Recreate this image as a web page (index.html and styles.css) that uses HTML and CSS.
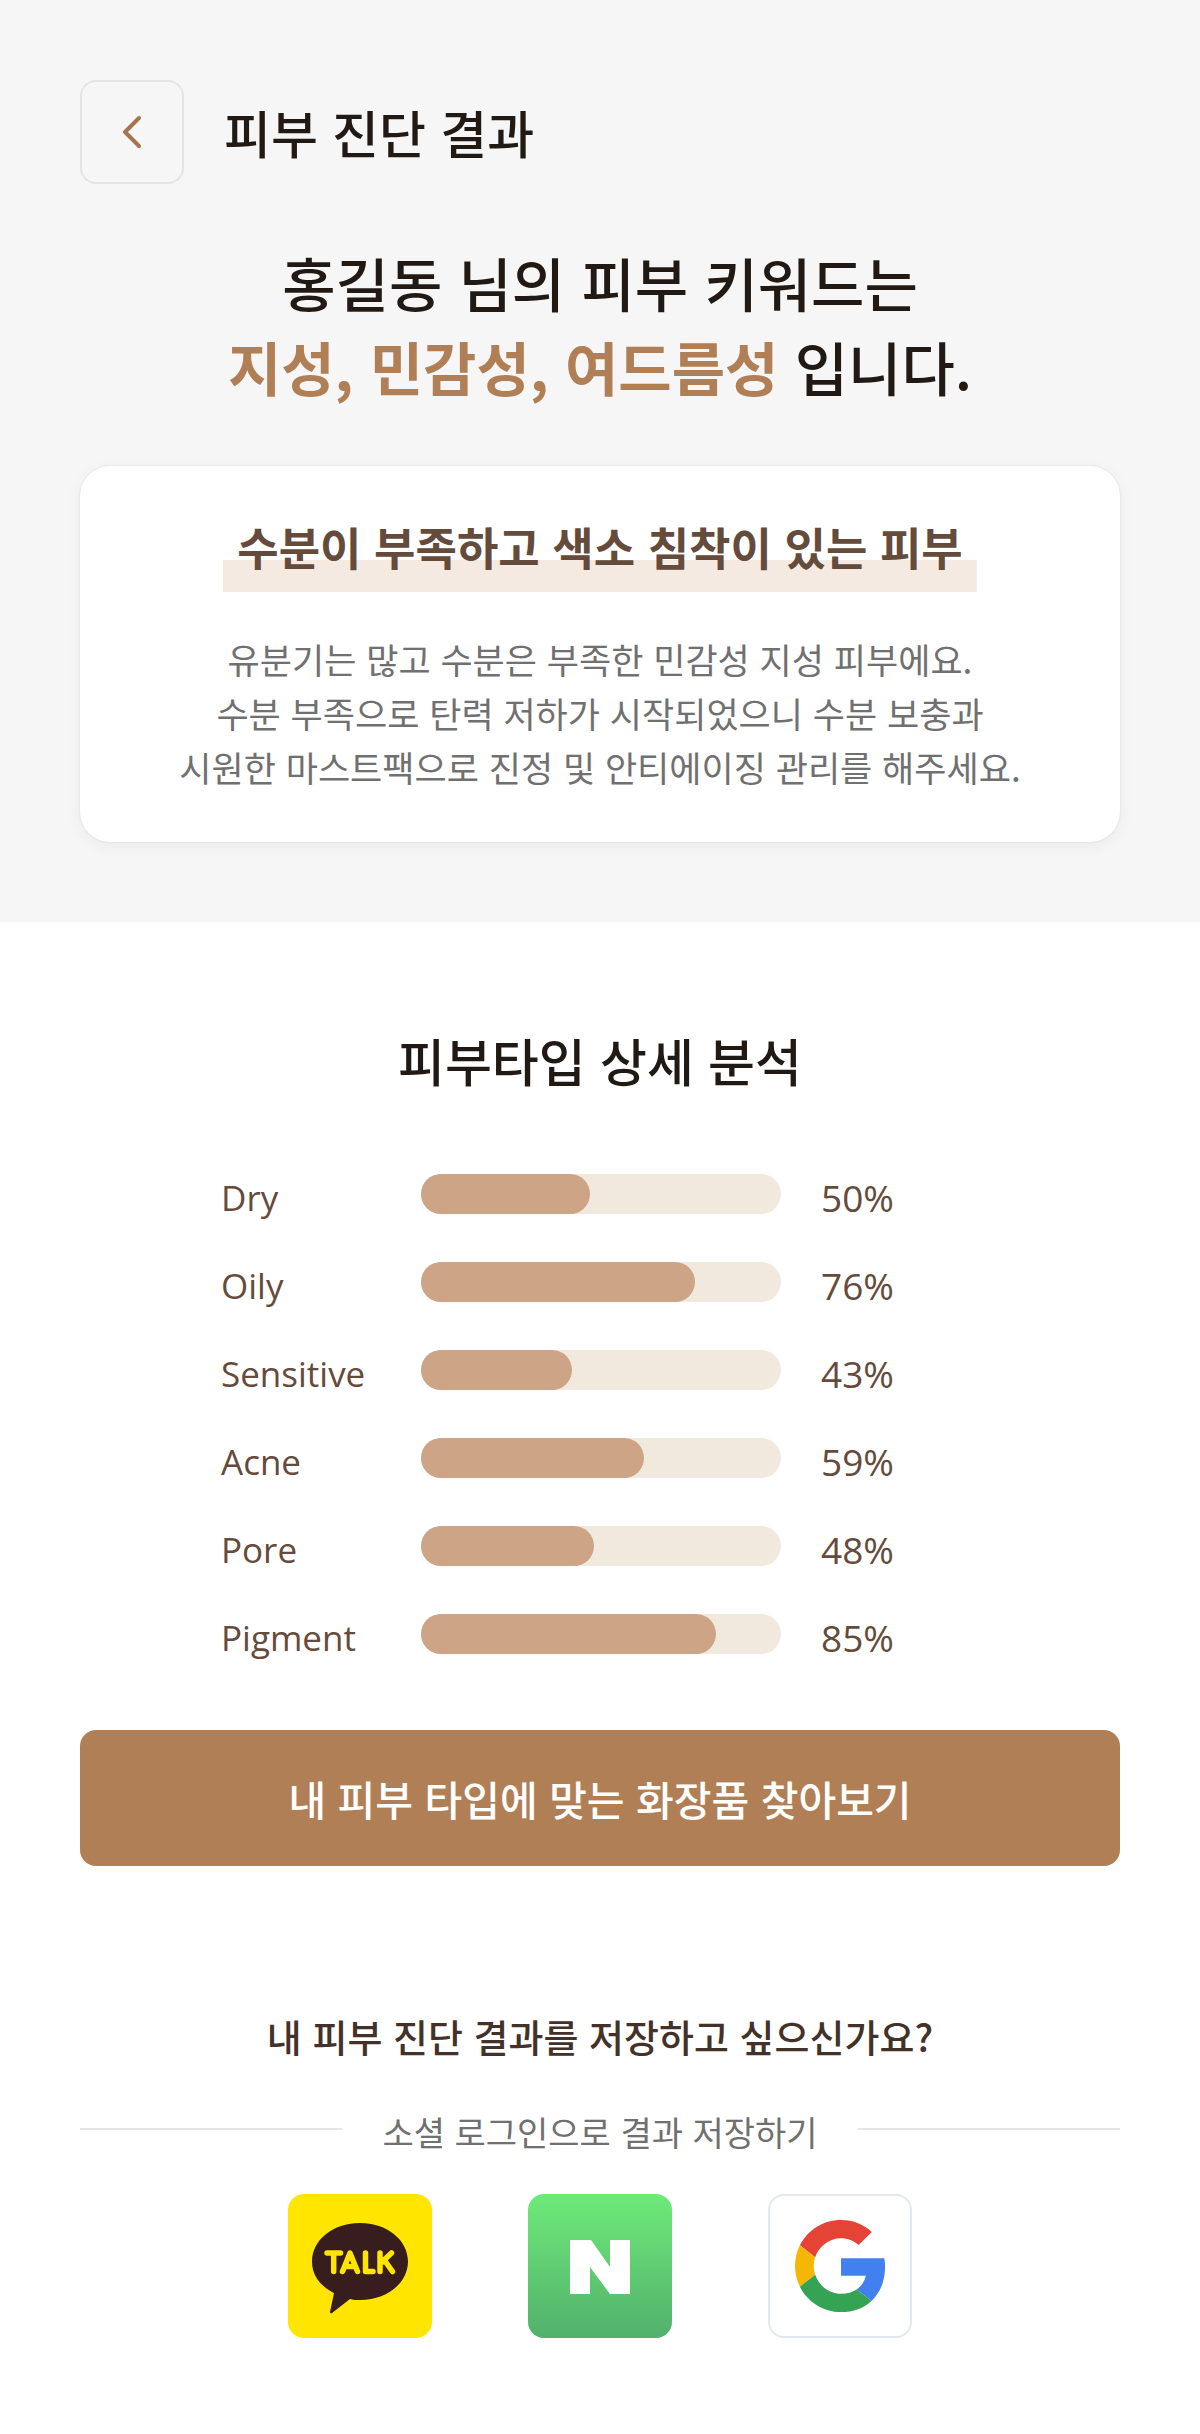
FILE: index.html
```html
<!DOCTYPE html>
<html lang="ko">
<head>
  <meta charset="utf-8">
  <meta name="viewport" content="width=device-width, initial-scale=1">
  <title>피부 진단 결과</title>
  <link rel="stylesheet" href="styles.css">
</head>
<body>
  <section class="summary">
    <header class="topbar">
      <button class="back" type="button" aria-label="뒤로">
        <svg class="back-icon" viewBox="0 0 20 34" aria-hidden="true"><path d="M17 3 3 17l14 14"/></svg>
      </button>
      <h1 class="page-title">피부 진단 결과</h1>
    </header>
    <p class="keywords">홍길동 님의 피부 키워드는<br><strong class="keyword-list">지성, 민감성, 여드름성</strong> 입니다.</p>
    <article class="card">
      <h2 class="card-title">수분이 부족하고 색소 침착이 있는 피부</h2>
      <p class="card-text">유분기는 많고 수분은 부족한 민감성 지성 피부에요.<br>수분 부족으로 탄력 저하가 시작되었으니 수분 보충과<br>시원한 마스트팩으로 진정 및 안티에이징 관리를 해주세요.</p>
    </article>
  </section>

  <main class="details">
    <h2 class="section-title">피부타입 상세 분석</h2>
    <ul class="chart">
      <li class="row"><span>Dry</span><span class="track"><span class="fill" style="width:47%"></span></span><span class="value">50%</span></li>
      <li class="row"><span>Oily</span><span class="track"><span class="fill" style="width:76%"></span></span><span class="value">76%</span></li>
      <li class="row"><span>Sensitive</span><span class="track"><span class="fill" style="width:42%"></span></span><span class="value">43%</span></li>
      <li class="row"><span>Acne</span><span class="track"><span class="fill" style="width:62%"></span></span><span class="value">59%</span></li>
      <li class="row"><span>Pore</span><span class="track"><span class="fill" style="width:48%"></span></span><span class="value">48%</span></li>
      <li class="row"><span>Pigment</span><span class="track"><span class="fill" style="width:82%"></span></span><span class="value">85%</span></li>
    </ul>
    <button class="cta" type="button">내 피부 타입에 맞는 화장품 찾아보기</button>
  </main>

  <footer class="save">
    <h2 class="save-title">내 피부 진단 결과를 저장하고 싶으신가요?</h2>
    <p class="divider"><span class="divider-text">소셜 로그인으로 결과 저장하기</span></p>
    <div class="logins">
      <button class="login kakao" type="button" aria-label="카카오 로그인">
        <svg viewBox="0 0 144 144" aria-hidden="true">
          <path fill="#371d1e" d="M72 29c27 0 48 17 48 38.500S99 106 72 106c-4 0-7 0-10-1l-18 14c-1 1-2 0-2-1l4-19C32 92 24 81 24 67.500 24 46 45 29 72 29z"/>
          <g fill="none" stroke="#ffe500" stroke-width="5.500" stroke-linecap="round" stroke-linejoin="round"><path d="M39 59h13.500M45.700 59v18.500M54.500 77.500l7.500-18.500 7.500 18.500M57.500 72.500h9M77.500 59v18.500h7.500M92 59v18.500M103.500 59 93 69M97 67l7.500 10.500"/></g>
        </svg>
      </button>
      <button class="login naver" type="button" aria-label="네이버 로그인">
        <svg viewBox="0 0 144 144" aria-hidden="true"><path fill="#fff" d="M42 46h21l19 27V46h20v54H82L62 73v27H42z"/></svg>
      </button>
      <button class="login google" type="button" aria-label="구글 로그인">
        <svg viewBox="0 0 144 144" aria-hidden="true">
          <g transform="translate(27 26) scale(1.917)">
            <path fill="#e54335" d="M24 9.500c3.540 0 6.710 1.220 9.210 3.600l6.850-6.850C35.900 2.380 30.470 0 24 0 14.620 0 6.510 5.380 2.560 13.220l7.980 6.190C12.430 13.720 17.740 9.500 24 9.500z"/>
            <path fill="#4280ef" d="M46.980 24.550c0-1.570-.150-3.090-.380-4.550H24v9.020h12.940c-.580 2.960-2.260 5.480-4.780 7.180l7.730 6c4.510-4.180 7.090-10.360 7.090-17.650z"/>
            <path fill="#f6b704" d="M10.530 28.590c-.480-1.450-.760-2.990-.760-4.590s.270-3.140.760-4.590l-7.980-6.190C.920 16.460 0 20.120 0 24c0 3.880.920 7.540 2.560 10.780z"/>
            <path fill="#34a353" d="M24 48c6.480 0 11.930-2.130 15.890-5.810l-7.730-6c-2.150 1.450-4.920 2.300-8.160 2.300-6.260 0-11.570-4.220-13.470-9.910l-7.980 6.190C6.510 42.620 14.620 48 24 48z"/>
          </g>
        </svg>
      </button>
    </div>
  </footer>
</body>
</html>
```
FILE: styles.css
```css
*, *::before, *::after {
  box-sizing: border-box;
}

body {
  margin: 0;
  background: #fff;
  color: #211914;
  font-family: "Noto Sans CJK KR", "Noto Sans", sans-serif;
}

h1, h2, p, ul {
  margin: 0;
  padding: 0;
}

button {
  padding: 0;
  border: 0;
  font: inherit;
  cursor: pointer;
}

.summary {
  padding: 80px;
  background: #f6f6f6;
}

.topbar {
  display: flex;
  align-items: center;
  gap: 40px;
}

.back {
  display: flex;
  align-items: center;
  justify-content: center;
  width: 104px;
  height: 104px;
  border: 2px solid #e4e4e4;
  border-radius: 16px;
  background: transparent;
}

.back-icon {
  width: 20px;
  height: 34px;
  fill: none;
  stroke: #a67550;
  stroke-width: 4;
  stroke-linecap: round;
  stroke-linejoin: round;
}

.page-title {
  font-size: 51px;
  font-weight: 500;
  line-height: 80px;
}

.keywords {
  margin-top: 56px;
  font-size: 58px;
  font-weight: 500;
  line-height: 84px;
  text-align: center;
}

.keyword-list {
  color: #b17f56;
  font-weight: 700;
}

.card {
  display: flex;
  flex-direction: column;
  align-items: center;
  gap: 40px;
  margin-top: 58px;
  padding: 48px;
  border-radius: 30px;
  background: #fff;
  box-shadow: 0 0 2px rgba(0, 0, 0, 0.12), 0 4px 16px rgba(0, 0, 0, 0.05);
  text-align: center;
}

.card-title {
  padding: 0 14px 12px;
  background: linear-gradient(#f4eae1, #f4eae1) bottom / 100% 32px no-repeat;
  color: #644b3b;
  font-size: 45px;
  font-weight: 700;
  line-height: 66px;
}

.card-text {
  color: #707070;
  font-size: 35px;
  line-height: 54px;
}

.details {
  display: flex;
  flex-direction: column;
  align-items: center;
  padding: 98px 80px 0;
}

.section-title {
  font-size: 51px;
  font-weight: 500;
  line-height: 80px;
}

.chart {
  display: grid;
  gap: 40px;
  margin-top: 74px;
  list-style: none;
}

.row {
  display: grid;
  grid-template-columns: 160px 360px 158px;
  gap: 40px;
  align-items: start;
  color: #644b3b;
  font-family: "Open Sans", "Noto Sans", sans-serif;
  font-size: 35px;
  line-height: 48px;
}

.value {
  font-size: 37px;
}

.track {
  height: 40px;
  border-radius: 20px;
  background: #f1e9de;
}

.fill {
  display: block;
  height: 100%;
  border-radius: 20px;
  background: #cda586;
}

.cta {
  width: 100%;
  margin-top: 68px;
  padding: 36px;
  border-radius: 16px;
  background: #b17f56;
  color: #fff;
  font-size: 41px;
  font-weight: 500;
  line-height: 64px;
}

.save {
  padding: 140px 80px 96px;
  text-align: center;
}

.save-title {
  color: #433229;
  font-size: 38px;
  font-weight: 500;
  line-height: 60px;
}

.divider {
  display: flex;
  align-items: center;
  gap: 40px;
  margin-top: 34px;
  color: #707070;
  font-size: 34px;
  line-height: 52px;
}

.divider::before,
.divider::after {
  content: "";
  flex: 1;
  height: 2px;
  background: #e4e4e4;
}

.divider-text {
  padding-top: 6px;
}

.logins {
  display: flex;
  justify-content: center;
  gap: 96px;
  margin-top: 36px;
}

.login {
  width: 144px;
  height: 144px;
  border-radius: 16px;
  overflow: hidden;
}

.login svg {
  display: block;
  width: 144px;
  height: 144px;
}

.kakao {
  background: #ffe500;
}

.naver {
  background: linear-gradient(#6eea79, #52b16c);
}

.google {
  border: 2px solid #e3e8ef;
  background: #fff;
}

.google svg {
  margin: -2px;
}
```
